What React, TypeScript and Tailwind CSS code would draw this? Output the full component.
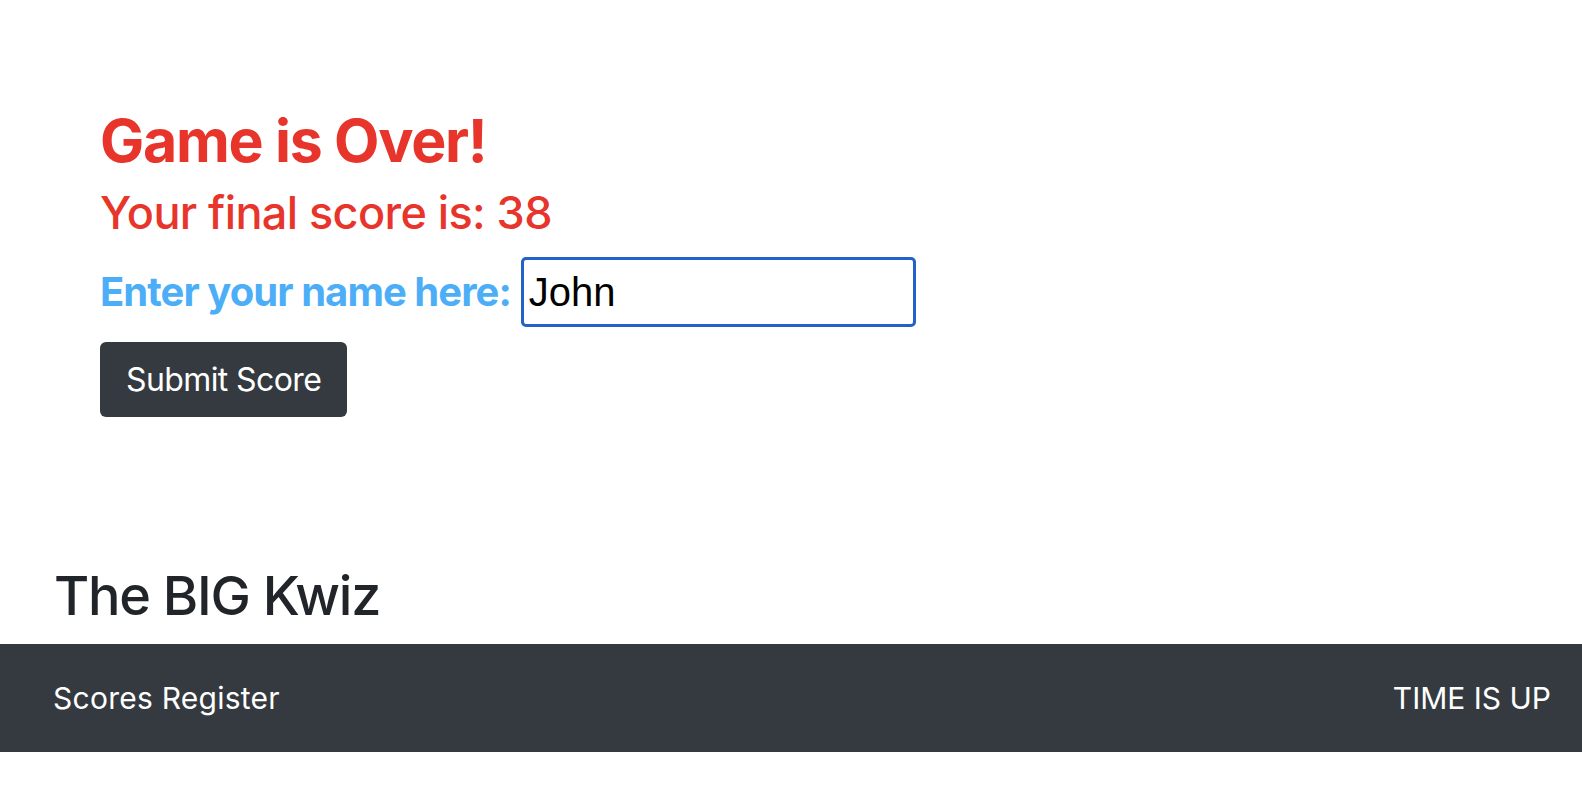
export default function App() {
  return (
    <div className="min-h-[788px] bg-white flex flex-col" style={{ fontFamily: 'Inter, "Noto Sans", sans-serif' }}>
      <main className="pl-[100px] pt-[105px] flex flex-col items-start">
        <h1 className="text-[59px] leading-[72px] font-bold tracking-[-1.3px] text-[#e8352b]">Game is Over!</h1>
        <h2 className="mt-[9px] text-[45px] leading-[54px] font-medium tracking-[-0.6px] text-[#e8352b]">Your final score is: 38</h2>
        <div className="mt-[17px] flex items-center gap-[10px]">
          <label className="text-[40px] leading-[48px] font-bold tracking-[-0.95px] text-[#4daef8]">Enter your name here:</label>
          <input
            defaultValue="John"
            className="w-[395px] h-[70px] border-[3px] border-[#2362c8] rounded-[5px] px-[5px] text-[40px] text-black outline-none"
            style={{ fontFamily: '"Liberation Sans", Arial, sans-serif' }}
          />
        </div>
        <button className="mt-[15px] h-[75px] px-[26px] rounded-[6px] bg-[#343a40] text-white text-[32px] tracking-[-0.6px] leading-none">
          Submit Score
        </button>
      </main>
      <div className="mt-[146px] pl-[54px] text-[54px] leading-[66px] font-medium tracking-[-1.25px] text-[#212529]">The BIG Kwiz</div>
      <nav className="mt-[15px] h-[108px] bg-[#343a40] flex items-center justify-between pl-[53px] pr-[31px] text-white text-[30px]">
        <span className="tracking-[0.25px]">Scores Register</span>
        <span>TIME IS UP</span>
      </nav>
    </div>
  );
}
